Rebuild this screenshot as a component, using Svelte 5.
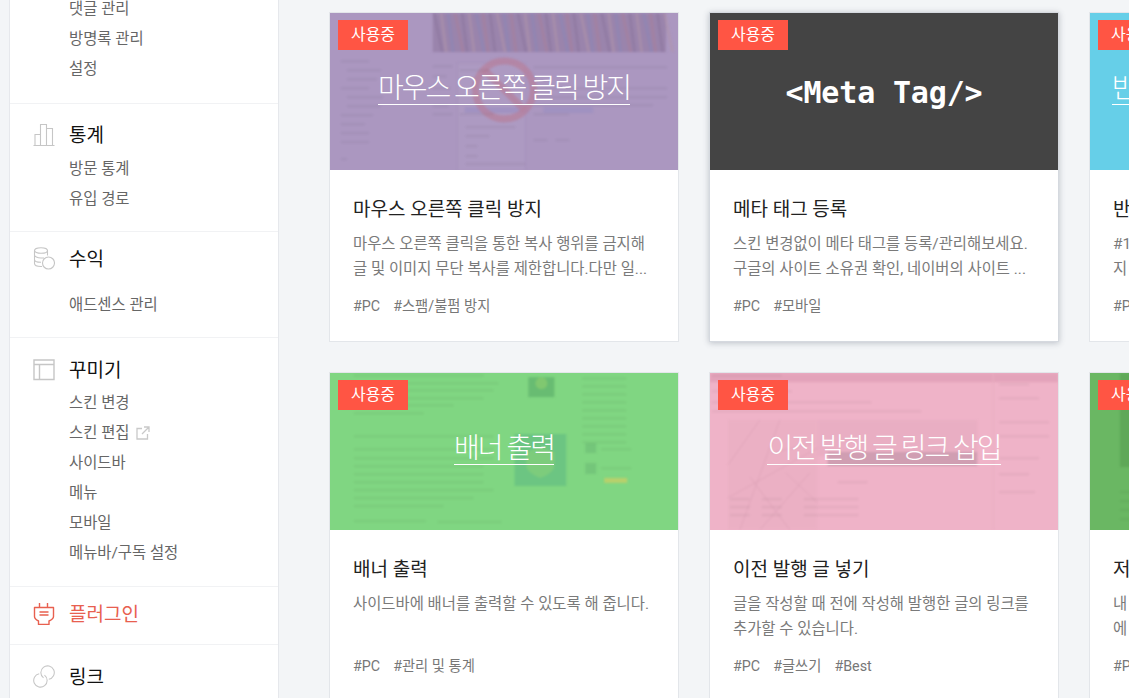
<script>
  const sections = [
    { cls: 's-first', items: ['댓글 관리', '방명록 관리', '설정'] },
    { cls: 's-stat', title: '통계', icon: 'chart', items: ['방문 통계', '유입 경로'] },
    { cls: 's-rev', title: '수익', icon: 'coins', items: ['애드센스 관리'] },
    { cls: 's-deco', title: '꾸미기', icon: 'layout', items: ['스킨 변경', '스킨 편집', '사이드바', '메뉴', '모바일', '메뉴바/구독 설정'] },
    { cls: 's-plug', title: '플러그인', icon: 'plug', active: true, items: [] },
    { cls: 's-link', title: '링크', icon: 'link', items: [] }
  ];

  const cards = [
    { art: 'mouse', color: '#ab97c0', head: '마우스 오른쪽 클릭 방지', title: '마우스 오른쪽 클릭 방지', desc: '마우스 오른쪽 클릭을 통한 복사 행위를 금지해\n글 및 이미지 무단 복사를 제한합니다.다만 일...', tags: ['#PC', '#스팸/불펌 방지'] },
    { art: 'none', color: '#444444', head: '<Meta Tag/>', mono: true, hover: true, title: '메타 태그 등록', desc: '스킨 변경없이 메타 태그를 등록/관리해보세요.\n구글의 사이트 소유권 확인, 네이버의 사이트 ...', tags: ['#PC', '#모바일'] },
    { art: 'none', color: '#66cfe8', head: '반응형 웹 스킨 적용 플러그인', title: '반응형 웹 스킨 적용', desc: '#1 반응형 웹 스킨을 적용할 수 있습니다.\n지 스킨을 확인해 주세요.', tags: ['#PC', '#모바일'] },
    { art: 'banner', color: '#80d682', head: '배너 출력', title: '배너 출력', desc: '사이드바에 배너를 출력할 수 있도록 해 줍니다.', tags: ['#PC', '#관리 및 통계'] },
    { art: 'prev', color: '#efb3c8', head: '이전 발행 글 링크 삽입', title: '이전 발행 글 넣기', desc: '글을 작성할 때 전에 작성해 발행한 글의 링크를\n추가할 수 있습니다.', tags: ['#PC', '#글쓰기', '#Best'] },
    { art: 'copy', color: '#6ab763', title: '저작권 보호 설정', desc: '내 블로그의 글을 보호할 수 있습니다.\n에 표시됩니다.', tags: ['#PC'] }
  ];

  // Faint text-like lines of the blurred page previews: [x, y, width]
  const lines = {
    mouse: [[11,47,28],[17,56,34],[17,65,30],[11,74,28],[17,83,36],[17,92,34],[11,101,32],[11,110,24],[11,119,28],[11,128,28],[11,145,6],[103,52,20],[103,62,14],[103,74,18],[103,92,16],[103,100,20],[204,53,134],[204,74,134],[204,83,134],[204,91,120],[204,100,36],[130,56,30],[130,100,34],[136,113,50],[136,122,24],[136,132,12],[136,142,12],[136,150,60],[204,126,14],[226,126,14]],
    banner: [[24,1,130],[24,9,145],[24,16,140],[24,24,130],[24,31,100],[24,39,70],[24,62,140],[24,75,140],[24,84,140],[24,92,130],[24,100,130],[24,108,130],[24,116,140],[24,124,120],[24,132,90],[24,147,72],[253,4,44],[253,12,44],[253,20,44],[253,28,44],[253,36,44],[253,44,44],[253,52,44],[253,60,44],[253,68,44],[272,75,30],[272,94,30],[108,148,64]],
    prev: [[2,1,70],[2,17,80],[2,28,160],[2,37,210],[128,108,30],[20,125,20],[52,125,20],[94,125,55],[20,133,20],[52,133,20],[94,133,55],[20,141,20],[52,141,20],[94,141,55],[290,10,30],[290,24,40],[290,48,50],[290,62,50],[290,84,40],[290,100,30],[290,118,36]],
    copy: [[30,118,60],[30,127,60],[30,136,60],[30,145,60]]
  };
</script>

{#snippet icon(name)}
  {#if name === 'chart'}
    <svg class="ico" viewBox="0 0 22 23"><path d="M0.5 22.5h21M2 22.500V11.500h5.500V22.500M7.500 22.500V1.500h6V22.500M13.500 22.500V5.500h6V22.500" /></svg>
  {:else if name === 'coins'}
    <svg class="ico" viewBox="0 0 22 23"><ellipse cx="8" cy="3.500" rx="6.500" ry="2.800" /><path d="M1.500 3.500v13c0 1.500 2.500 3 6.500 3h1M1.500 8c0 1.500 2.800 3 6.500 3h3M1.500 12.500c0 1.500 2.800 2.800 6.500 2.800M14.500 3.500v5" /><circle cx="15.500" cy="16" r="6" /></svg>
  {:else if name === 'layout'}
    <svg class="ico" viewBox="0 0 22 21"><path d="M1 1h20v19.500H1zM1 5.500h20M6.500 5.500v15" stroke-width="1.400" /></svg>
  {:else if name === 'plug'}
    <svg class="ico" viewBox="0 0 22 23"><path d="M6.500 1v4.500M14.500 1v4.500M1.500 5.500h19v9c0 2-1 3-4.500 4.500v3.500H5.500V19c-3-1.500-4-2.500-4-4.500z" stroke-linejoin="round" /><path d="M6.500 10h9M6.500 13h9" /></svg>
  {:else if name === 'link'}
    <svg class="ico" viewBox="0 0 22 24"><path d="M11.500 10.500A7 7 0 1 1 6 9.200" /><path d="M10.500 13.500A7 7 0 1 1 16 14.800" /></svg>
  {/if}
{/snippet}

{#snippet art(kind)}
  {#if kind !== 'none'}
    <svg class="art" viewBox="0 0 349 157" aria-hidden="true">
      {#if kind === 'mouse'}
        <rect x="103" y="0" width="234" height="39" fill="#9a84ac" />
        {#each Array(34) as _, i}
          <path d={`M${103 + i * 7} 0l${i % 3 === 0 ? 8 : 5} 39h3l${i % 3 === 0 ? -8 : -5} -39z`} fill={['#8d769f', '#b195ab', '#8a86b8', '#a97f9a'][i % 4]} opacity=".55" />
        {/each}
        <rect x="128" y="50" width="68" height="116" fill="#b09ec4" stroke="#a18db8" opacity=".5" />
        <rect x="135" y="94" width="64" height="6" fill="#9a8dc2" opacity=".6" />
        <rect x="214" y="94" width="50" height="6" fill="#9a8dc2" opacity=".6" />
        <circle cx="175" cy="77" r="29" fill="none" stroke="#b5809d" stroke-width="7" opacity=".75" />
        <path d="M155 57l40 40" stroke="#b5809d" stroke-width="7" opacity=".75" />
      {:else if kind === 'banner'}
        <rect x="185" y="61" width="52" height="52" fill="#6cc582" />
        <path d="M211 74l14 5v13c0 6-6 10-14 13-8-3-14-7-14-13V79z" fill="#7dcc7c" />
        <rect x="199" y="4" width="26" height="20" fill="#68bc72" />
        <circle cx="212" cy="10" r="6" fill="#80c870" />
        <rect x="275" y="105" width="23" height="5" fill="#b7d06c" />
        <rect x="256" y="70" width="11" height="10" fill="#74c67a" />
        <rect x="256" y="90" width="11" height="11" fill="#74c67a" />
      {:else if kind === 'prev'}
        <rect x="0" y="0" width="349" height="9" fill="#e3a3ba" />
        <rect x="18" y="47" width="90" height="110" fill="#ebb0c4" />
        <rect x="108" y="47" width="160" height="36" fill="#e9aec3" />
        <rect x="118" y="79" width="150" height="14" fill="#d09eb2" />
        <path d="M18 92L50 47M30 157L70 47M18 125L108 75M50 157L100 100M62 80L104 70M40 104L80 157M76 100L108 130" fill="none" stroke="#cf95ab" stroke-width=".6" opacity=".6" />
        <path d="M284 0v157" stroke="#e8adc1" />
      {:else if kind === 'copy'}
        <rect x="30" y="0" width="60" height="94" fill="#5fa858" />
      {/if}
      {#each lines[kind] as l}
        <rect x={l[0]} y={l[1]} width={l[2]} height="2.500" fill="#000" opacity=".04" />
      {/each}
    </svg>
  {/if}
{/snippet}

<div class="page">
  <nav class="side">
    {#each sections as s}
      <section class={s.cls}>
        {#if s.title}
          <h3 class:active={s.active}>
            {@render icon(s.icon)}
            <span>{s.title}</span>
          </h3>
        {/if}
        {#if s.items.length}
          <ul>
            {#each s.items as item}
              <li>
                {item}
                {#if item === '스킨 편집'}
                  <svg class="ext" viewBox="0 0 14 14"><path d="M6 2.500H1v10.500h10.500V8M8 1h5v5M13 1L6 8" /></svg>
                {/if}
              </li>
            {/each}
          </ul>
        {/if}
      </section>
    {/each}
  </nav>

  <main class="grid">
    {#each cards as c}
      <article class="card" class:hover={c.hover}>
        <div class="thumb" style:background-color={c.color}>
          {@render art(c.art)}
          <span class="badge">사용중</span>
          {#if c.head}
            <div class="head" class:mono={c.mono}><span>{c.head}</span></div>
          {/if}
        </div>
        <div class="body">
          <h4>{c.title}</h4>
          <p>{c.desc}</p>
          <div class="tags">
            {#each c.tags as t}<span>{t}</span>{/each}
          </div>
        </div>
      </article>
    {/each}
  </main>
</div>

<style>
  :global(body) {
    margin: 0;
    background: #f3f5f7;
  }
  .page {
    display: flex;
    align-items: flex-start;
    width: 1129px;
    height: 698px;
    overflow: hidden;
    font-family: Roboto, "Noto Sans CJK KR", sans-serif;
    font-weight: 400;
  }
  .side {
    flex: none;
    box-sizing: border-box;
    width: 270px;
    height: 698px;
    margin-left: 9px;
    background: #fff;
    border-left: 1px solid #e6e8ec;
    border-right: 1px solid #e6e8ec;
    overflow: hidden;
  }
  section {
    border-bottom: 1px solid #f1f2f4;
  }
  .s-first { margin-top: -7px; padding-bottom: 20px; }
  .s-stat { padding: 15px 0 18px; }
  .s-stat ul { margin-top: 4px; }
  .s-rev { padding: 11px 0 18px; }
  .s-rev ul { margin-top: 16px; }
  .s-deco { padding: 16px 0 19px; }
  .s-deco ul { margin-top: 3px; }
  .s-plug { padding: 11px 0 16px; }
  .s-link { padding: 16px 0; border-bottom: 0; }
  h3 {
    display: flex;
    align-items: center;
    gap: 14px;
    height: 30px;
    margin: 0;
    padding-left: 23px;
    font-size: 19px;
    font-weight: 400;
    line-height: 26px;
    color: #111;
  }
  h3 span {
    padding-top: 4px;
  }
  h3.active {
    color: #e8604f;
  }
  .ico {
    flex: none;
    width: 22px;
    height: 23px;
    fill: none;
    stroke: #c6c6c6;
    stroke-width: 1.100;
  }
  h3.active .ico {
    stroke: #e8604f;
    stroke-width: 1.400;
  }
  ul {
    margin: 0;
    padding: 0 0 0 59px;
    list-style: none;
  }
  li {
    box-sizing: border-box;
    display: flex;
    align-items: center;
    gap: 7px;
    height: 30px;
    padding-top: 2px;
    font-size: 15.400px;
    line-height: 28px;
    color: #666;
  }
  .ext {
    width: 14px;
    height: 14px;
    fill: none;
    stroke: #c9c9c9;
    stroke-width: 1.300;
  }
  .grid {
    flex: none;
    display: grid;
    grid-template-columns: repeat(3, 350px);
    gap: 30px;
    margin-left: 50px;
    padding-top: 12px;
  }
  .card {
    box-sizing: border-box;
    height: 330px;
    background: #fff;
    border: 1px solid #e3e6ea;
    overflow: hidden;
  }
  .card.hover {
    border-color: #d5d9df;
    box-shadow: 0 1px 6px rgba(60, 70, 90, 0.3);
  }
  .thumb {
    position: relative;
    height: 157px;
    overflow: hidden;
  }
  .art {
    position: absolute;
    inset: 0;
    width: 100%;
    height: 100%;
    filter: blur(0.8px);
  }
  .badge {
    position: absolute;
    top: 7px;
    left: 8px;
    width: 70px;
    height: 30px;
    background: #ff5544;
    color: #fff;
    font-size: 16px;
    line-height: 29px;
    text-align: center;
  }
  .head {
    position: relative;
    display: flex;
    justify-content: center;
    padding-top: 61px;
    color: #fff;
    font-size: 28px;
    font-weight: 300;
    line-height: 30px;
    white-space: nowrap;
  }
  .head span {
    border-bottom: 1px solid #fff;
    letter-spacing: -2px;
  }
  .head.mono {
    padding-top: 60px;
    font-family: "DejaVu Sans Mono", monospace;
    font-size: 30px;
    font-weight: 700;
    line-height: 40px;
  }
  .head.mono span {
    border: 0;
    letter-spacing: -0.150px;
  }
  .body {
    padding: 26px 23px 0;
  }
  h4 {
    margin: 0;
    font-size: 19px;
    font-weight: 400;
    line-height: 28px;
    color: #222;
    white-space: nowrap;
  }
  p {
    height: 50px;
    margin: 8px 0 0;
    font-size: 15.400px;
    line-height: 25px;
    color: #7a7a7a;
    overflow: hidden;
    white-space: pre-line;
  }
  .tags {
    display: flex;
    gap: 13px;
    margin-top: 12px;
    font-size: 14.300px;
    line-height: 24px;
    color: #777;
  }
</style>
